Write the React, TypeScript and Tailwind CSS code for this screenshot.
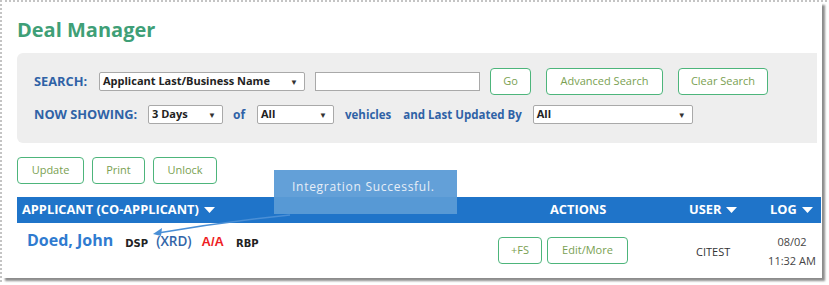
import React from 'react';

function Caret({ className = '' }: { className?: string }) {
  return (
    <svg width="11" height="6" viewBox="0 0 11 6" className={className}>
      <path d="M0 0 L11 0 L5.5 6 Z" fill="currentColor" />
    </svg>
  );
}

function FakeSelect({ value, width }: { value: string; width: string }) {
  return (
    <div
      className={`${width} h-[19px] bg-white border border-[#a9a9a9] rounded-[2px] flex items-center justify-between pl-[3px] pr-[6px] text-[11px] font-bold text-[#222]`}
    >
      <span>{value}</span>
      <span className="text-[8px] text-[#333]">▼</span>
    </div>
  );
}

function GreenButton({ label, width }: { label: string; width: string }) {
  return (
    <div
      className={`${width} h-[27px] border border-[#4db57b] rounded-[4px] bg-white flex items-center justify-center text-[11px] text-[#7a9f52]`}
    >
      {label}
    </div>
  );
}

export default function App() {
  return (
    <div className="w-[829px] h-[285px] bg-white" style={{ fontFamily: '"Open Sans", "Noto Sans", sans-serif' }}>
      <div className="w-[827px] h-[282px] border-t-2 border-l-2 border-dotted border-[#c4c4c4]">
        <div className="relative w-[820px] h-[276px] bg-white shadow-[3px_3px_2px_rgba(0,0,0,0.45)] pl-[15px] pt-[14px]">
          <h1 className="text-[20px] font-bold text-[#3f9f77] leading-[27px]">Deal Manager</h1>

          {/* search panel */}
          <div className="mt-[10px] mr-[5px] h-[90px] bg-[#eeeeee] rounded-l-[6px] pl-[17px] pt-[19px] flex flex-col gap-[14px]">
            <div className="flex items-center h-[19px]">
              <span className="text-[12.8px] font-bold text-[#2f62a6] w-[65px]">SEARCH:</span>
              <FakeSelect value="Applicant Last/Business Name" width="w-[206px]" />
              <div className="ml-[10px] w-[165px] h-[19px] bg-white border border-[#a9a9a9]" />
              <div className="ml-[10px] flex gap-[15px]">
                <GreenButton label="Go" width="w-[41px]" />
                <GreenButton label="Advanced Search" width="w-[117px]" />
                <GreenButton label="Clear Search" width="w-[90px]" />
              </div>
            </div>
            <div className="flex items-center h-[19px]">
              <span className="text-[12.8px] font-bold text-[#2f62a6] w-[114px]">NOW SHOWING:</span>
              <FakeSelect value="3 Days" width="w-[75px]" />
              <span className="ml-[10px] w-[24px] text-[12px] font-bold text-[#2f62a6]">of</span>
              <FakeSelect value="All" width="w-[77px]" />
              <span className="ml-[11px] text-[11.5px] font-bold text-[#2f62a6]">vehicles</span>
              <span className="ml-[12px] text-[11.5px] font-bold text-[#2f62a6]">and Last Updated By</span>
              <div className="ml-[11px]">
                <FakeSelect value="All" width="w-[160px]" />
              </div>
            </div>
          </div>

          {/* action buttons */}
          <div className="mt-[14px] flex gap-[8px]">
            <GreenButton label="Update" width="w-[67px]" />
            <GreenButton label="Print" width="w-[53px]" />
            <GreenButton label="Unlock" width="w-[64px]" />
          </div>

          {/* table header */}
          <div className="mt-[13px] mr-[1px] h-[26px] bg-[#1f74c9] flex items-center text-white text-[12.8px] font-bold">
            <div className="pl-[5px] flex items-center gap-[5px] flex-1">
              <span>APPLICANT (CO-APPLICANT)</span>
              <Caret />
            </div>
            <div className="w-[190px] pl-[55px]">ACTIONS</div>
            <div className="w-[82px] pl-[4px] flex items-center gap-[5px]">
              <span>USER</span>
              <Caret />
            </div>
            <div className="w-[54px] pl-[3px] flex items-center gap-[5px]">
              <span>LOG</span>
              <Caret />
            </div>
          </div>

          {/* data row */}
          <div className="h-[52px] flex">
            <div className="flex-1 pl-[10px] pt-[6px] flex items-start">
              <span className="text-[16px] font-bold text-[#2f7bd0] leading-[22px]">Doed, John</span>
              <span
                className="ml-[12px] mt-[7px] text-[10px] font-bold text-[#222]"
                style={{ fontFamily: '"DejaVu Sans", sans-serif' }}
              >
                DSP
              </span>
              <span className="ml-[8px] mt-[4px] text-[13.5px] text-[#3265a8] font-semibold leading-[16px]">(XRD)</span>
              <span
                className="ml-[10px] mt-[5px] text-[13px] font-bold text-[#ee1c24] leading-[16px]"
                style={{ fontFamily: '"Liberation Sans", Arial, sans-serif' }}
              >
                A/A
              </span>
              <span
                className="ml-[12px] mt-[7px] text-[10px] font-bold text-[#222]"
                style={{ fontFamily: '"DejaVu Sans", sans-serif' }}
              >
                RBP
              </span>
            </div>
            <div className="w-[190px] flex items-start pt-[14px] gap-[5px] pl-[2px]">
              <GreenButton label="+FS" width="w-[44px]" />
              <GreenButton label="Edit/More" width="w-[81px]" />
            </div>
            <div className="w-[82px] pt-[21px] pl-[10px] text-[11px] text-[#333]">CITEST</div>
            <div className="w-[54px] pt-[9px] pr-[6px] text-[11px] text-[#444] leading-[19px] text-center">
              <div>08/02</div>
              <div>11:32 AM</div>
            </div>
          </div>

          {/* tooltip */}
          <div className="absolute left-[272px] top-[168px] w-[183px] h-[44px] bg-[#5b9bd6]/95 pt-[8px] pl-[18px] text-[12px] tracking-[0.06em] text-[#e7eef7]">
            Integration Successful.
          </div>
          <svg className="absolute left-0 top-0 pointer-events-none" width="820" height="276">
            <path d="M288 213 Q220 220 156 231" stroke="#4a8fd6" strokeWidth="1.5" fill="none" />
            <path d="M151 232 L160 226 L159 234 Z" fill="#4a8fd6" />
          </svg>
        </div>
      </div>
    </div>
  );
}
